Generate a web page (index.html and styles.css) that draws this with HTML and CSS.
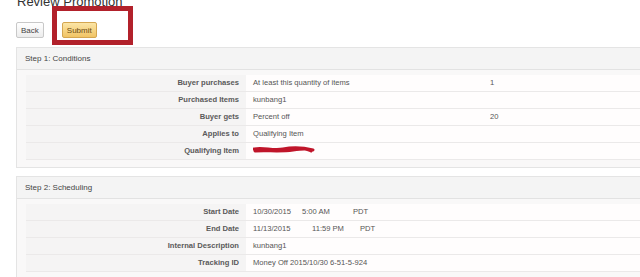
FILE: index.html
```html
<!DOCTYPE html>
<html lang="en">
<head>
    <meta charset="UTF-8">
    <title>Review Promotion</title>
    <link rel="stylesheet" href="styles.css">
</head>
<body>
    <div class="page">
        <h1 class="page-title">Review Promotion</h1>
        <div class="toolbar">
            <button class="btn">Back</button>
            <button class="btn btn-primary">Submit</button>
        </div>
        <div class="highlight"></div>

        <section class="panel">
            <div class="panel-header">Step 1: Conditions</div>
            <div class="panel-body">
                <div class="row">
                    <div class="label">Buyer purchases</div>
                    <div class="value">At least this quantity of items</div>
                    <div class="value extra">1</div>
                </div>
                <div class="row">
                    <div class="label">Purchased Items</div>
                    <div class="value">kunbang1</div>
                    <div class="value extra"></div>
                </div>
                <div class="row">
                    <div class="label">Buyer gets</div>
                    <div class="value">Percent off</div>
                    <div class="value extra">20</div>
                </div>
                <div class="row">
                    <div class="label">Applies to</div>
                    <div class="value">Qualifying Item</div>
                    <div class="value extra"></div>
                </div>
                <div class="row">
                    <div class="label">Qualifying Item</div>
                    <div class="value">
                        <svg class="scribble" width="62" height="9" viewBox="0 0 62 9">
                            <path d="M1 4 C10 2 20 6 30 4 S48 2 60 5 M2 6 C14 5 26 7 40 5 S54 4 58 6" stroke="#c0152a" stroke-width="3" fill="none" stroke-linecap="round"/>
                        </svg>
                    </div>
                    <div class="value extra"></div>
                </div>
            </div>
        </section>

        <section class="panel">
            <div class="panel-header">Step 2: Scheduling</div>
            <div class="panel-body">
                <div class="row">
                    <div class="label">Start Date</div>
                    <div class="value"><span class="date">10/30/2015</span><span class="time">5:00 AM</span><span class="tz">PDT</span></div>
                    <div class="value extra"></div>
                </div>
                <div class="row">
                    <div class="label">End Date</div>
                    <div class="value"><span class="date">11/13/2015</span><span class="time late">11:59 PM</span><span class="tz">PDT</span></div>
                    <div class="value extra"></div>
                </div>
                <div class="row">
                    <div class="label">Internal Description</div>
                    <div class="value">kunbang1</div>
                    <div class="value extra"></div>
                </div>
                <div class="row">
                    <div class="label">Tracking ID</div>
                    <div class="value">Money Off 2015/10/30 6-51-5-924</div>
                    <div class="value extra"></div>
                </div>
            </div>
        </section>
    </div>
</body>
</html>
```

FILE: styles.css
```css
body {
    margin: 0;
    font-family: 'Liberation Sans', Arial, sans-serif;
    background-color: #fff;
    color: #555;
    overflow: hidden;
}
.page {
    position: relative;
    display: flow-root;
    padding-left: 16px;
}
.page-title {
    margin: -6px 0 0 1px;
    font-size: 13px;
    line-height: 15px;
    font-weight: normal;
    color: #333;
}
.toolbar {
    display: flex;
    gap: 18px;
    margin-top: 13px;
}
.btn {
    height: 16px;
    padding: 0 4px;
    font-family: inherit;
    font-size: 8px;
    color: #444;
    background: linear-gradient(#ffffff, #ececec);
    border: 1px solid #c8c8c8;
    border-radius: 2px;
}
.btn-primary {
    padding: 0 4px;
    color: #6b4a12;
    background: linear-gradient(#fbe5a6, #f1c465);
    border-color: #d4a650;
}
.highlight {
    position: absolute;
    left: 52px;
    top: 6px;
    width: 71px;
    height: 29px;
    border: 5px solid #b2212b;
}
.panel {
    margin-top: 9px;
    border: 1px solid #e4e4e4;
    border-right: none;
}
.panel + .panel {
    margin-top: 8px;
}
.panel-header {
    height: 21px;
    line-height: 21px;
    padding-left: 8px;
    font-size: 8px;
    color: #444;
    background-color: #f4f4f4;
    border-bottom: 1px solid #e2e2e2;
}
.panel-body {
    padding: 5px 0 7px 9px;
    background-color: #f9f8f8;
}
.row {
    display: grid;
    grid-template-columns: 220px 236px 1fr;
    height: 17px;
    border-bottom: 1px solid #ebe9e9;
    box-sizing: border-box;
}
.label {
    padding-right: 7px;
    text-align: right;
    font-size: 7.6px;
    font-weight: bold;
    line-height: 16px;
    color: #5a5a5a;
    background-color: #f5f4f4;
}
.value {
    padding-left: 7px;
    font-size: 7.6px;
    line-height: 16px;
    color: #555;
    background-color: #fffdfd;
}
.extra {
    padding-left: 8px;
}
.date {
    display: inline-block;
    width: 49px;
}
.time {
    display: inline-block;
    width: 51px;
}
.time.late {
    width: 48px;
    margin-left: 10px;
}
.scribble {
    display: inline-block;
    vertical-align: middle;
    margin-top: -3px;
}
```
